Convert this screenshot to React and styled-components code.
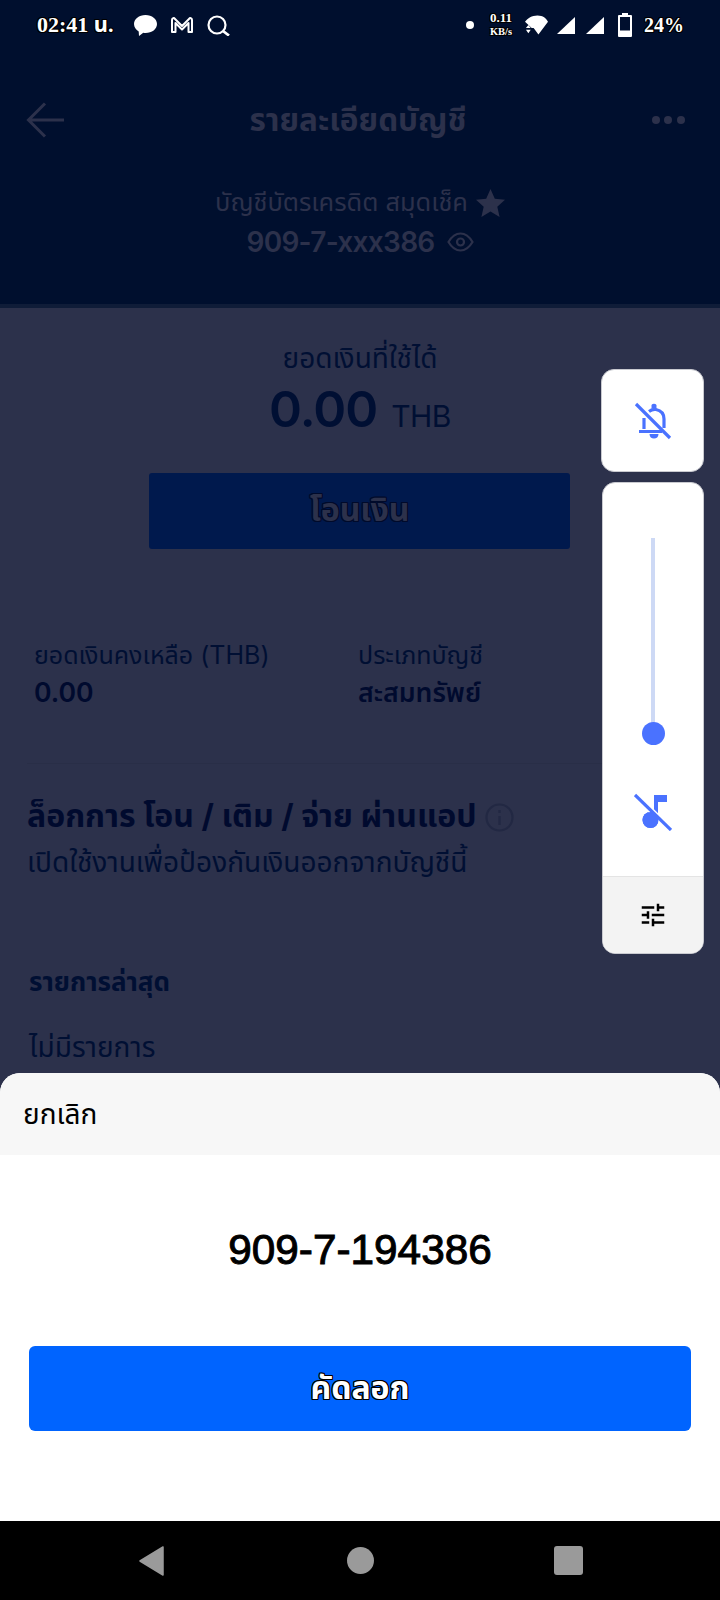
import React from "react";
import styled, { createGlobalStyle } from "styled-components";

const Global = createGlobalStyle`
    html, body {
        margin: 0;
        padding: 0;
        background: #2c314b;
    }
    * {
        box-sizing: border-box;
    }
`

const FONT = `Inter, "Noto Sans Thai", "Noto Sans", "DejaVu Sans", sans-serif`
const OUTLINE = `-1px 0 0 #000, 1px 0 0 #000, 0 -1px 0 #000, 0 1px 0 #000, -1px -1px 0 #000, 1px 1px 0 #000, -1px 1px 0 #000, 1px -1px 0 #000`
const OUTLINE_DIM = `-1px 0 0 #000a2a, 1px 0 0 #000a2a, 0 -1px 0 #000a2a, 0 1px 0 #000a2a, -1px -1px 0 #000a2a, 1px 1px 0 #000a2a, -1px 1px 0 #000a2a, 1px -1px 0 #000a2a`

const Page = styled.div`
    position: relative;
    display: flex;
    flex-direction: column;
    width: 720px;
    height: 1600px;
    overflow: hidden;
    background: #2c314b;
    font-family: ${FONT};
`

const Header = styled.header`
    flex: none;
    height: 308px;
    background: #000f2e;
    border-bottom: 4px solid #0f1c38;
`

const StatusBar = styled.div`
    display: flex;
    align-items: center;
    height: 50px;
    padding: 0 36px 0 37px;
    color: #fff;
`

const StatusText = styled.span`
    font-family: "Liberation Serif", "Noto Sans Thai", serif;
    font-weight: 700;
    font-size: ${(p) => p.size}px;
    letter-spacing: ${(p) => p.spacing || 0}px;
    margin-left: ${(p) => p.left || 0}px;
    white-space: nowrap;
    text-shadow: ${OUTLINE};
`

const StatusGroup = styled.div`
    display: flex;
    align-items: center;
    gap: ${(p) => p.gap}px;
    margin-left: ${(p) => p.left || 0}px;
`

const Speed = styled.div`
    display: flex;
    flex-direction: column;
    align-items: center;
    width: 24px;
    margin-left: 15px;
    font-family: "Liberation Serif", serif;
    font-weight: 700;
    line-height: 14px;
    text-shadow: ${OUTLINE};
`

const SpeedValue = styled.span`
    font-size: 13px;
`

const SpeedUnit = styled.span`
    font-size: 10.5px;
`

const Spacer = styled.div`
    flex: 1;
`

const TitleRow = styled.div`
    display: flex;
    align-items: center;
    justify-content: space-between;
    height: 44px;
    margin-top: 48px;
    padding: 0 35px 0 26px;
`

const Title = styled.h1`
    margin: 0;
    font-size: 31.5px;
    line-height: 44px;
    font-weight: 700;
    color: #2c314b;
`

const Dots = styled.div`
    display: flex;
    gap: 4.5px;
`

const Dot = styled.span`
    width: 8px;
    height: 8px;
    border-radius: 50%;
    background: #2c314b;
`

const AccountType = styled.div`
    display: flex;
    align-items: center;
    justify-content: center;
    gap: 8px;
    height: 40px;
    margin-top: 41px;
    font-size: 25.4px;
    color: #2c314b;
`

const AccountNo = styled.div`
    display: flex;
    align-items: center;
    justify-content: center;
    gap: 12px;
    height: 38px;
    font-size: 28px;
    letter-spacing: -0.7px;
    font-weight: 600;
    color: #2c314b;
`

const Body = styled.main`
    flex: 1;
    padding-top: 30px;
    color: #000a2e;
`

const Center = styled.div`
    height: ${(p) => p.h}px;
    line-height: ${(p) => p.h}px;
    text-align: center;
    font-size: 28px;
    color: #000f33;
`

const Amount = styled.b`
    font-size: 50px;
    letter-spacing: -1px;
    font-weight: 600;
`

const Currency = styled.span`
    margin-left: 14px;
    font-size: 30px;
    letter-spacing: -0.5px;
`

const TransferButton = styled.div`
    display: flex;
    align-items: center;
    justify-content: center;
    width: 421px;
    height: 76px;
    margin: 33px 0 0 149px;
    border-radius: 3px;
    background: #00194d;
    font-size: 32px;
    font-weight: 700;
    color: #2c314b;
    text-shadow: ${OUTLINE_DIM};
`

const InfoGrid = styled.div`
    display: grid;
    grid-template-columns: 324px 1fr;
    margin-top: 88px;
    padding-left: 34px;
`

const InfoLabel = styled.div`
    height: 36px;
    line-height: 36px;
    font-size: 25px;
    color: #000f33;
`

const InfoValue = styled.div`
    height: 38px;
    line-height: 38px;
    font-size: 26.6px;
    font-weight: 600;
    color: #000a2e;
`

const Divider = styled.div`
    height: 1px;
    margin: 52px 27px 0;
    background: #292e47;
`

const LockTitle = styled.div`
    display: flex;
    align-items: center;
    gap: 8px;
    height: 40px;
    margin: 33px 0 0 27px;
    font-size: 32px;
    font-weight: 700;
`

const Line = styled.div`
    height: 40px;
    line-height: 40px;
    margin: ${(p) => p.top}px 0 0 ${(p) => p.left || 29}px;
    font-size: ${(p) => p.size || 28}px;
    font-weight: ${(p) => (p.bold ? 700 : 400)};
    color: #000f33;
`

const Sheet = styled.section`
    flex: none;
    height: 448px;
    overflow: hidden;
    border-radius: 20px 20px 0 0;
    background: #fff;
`

const SheetHead = styled.div`
    height: 82px;
    line-height: 82px;
    padding-left: 23px;
    background: #f7f7f7;
    font-size: 28px;
    color: #000;
`

const AccountFull = styled.div`
    height: 60px;
    margin-top: 65px;
    line-height: 60px;
    text-align: center;
    font-family: "Liberation Sans", sans-serif;
    font-size: 42.3px;
    -webkit-text-stroke: 1px #000;
    color: #000;
`

const CopyButton = styled.div`
    display: flex;
    align-items: center;
    justify-content: center;
    height: 85px;
    margin: 66px 29px 0;
    border-radius: 6px;
    background: #0064ff;
    font-size: 32px;
    font-weight: 700;
    color: #fff;
    text-shadow: ${OUTLINE};
`

const NavBar = styled.nav`
    flex: none;
    display: flex;
    align-items: center;
    height: 79px;
    padding-left: 139px;
    background: #000;
`

const NavHome = styled.span`
    width: 27px;
    height: 27px;
    margin-left: 183px;
    border-radius: 50%;
    background: #9a9a9a;
`

const NavSquare = styled.span`
    width: 29px;
    height: 29px;
    margin-left: 180px;
    border-radius: 3px;
    background: #9a9a9a;
`

const VolumeDock = styled.aside`
    position: absolute;
    top: 369px;
    left: 601px;
    display: flex;
    flex-direction: column;
    align-items: flex-end;
    gap: 10px;
    width: 103px;
`

const Card = styled.div`
    width: ${(p) => p.w}px;
    overflow: hidden;
    border-radius: 13px;
    border: 1px solid #c9cad0;
    background: #fff;
`

const BellCell = styled.div`
    display: flex;
    align-items: center;
    justify-content: center;
    height: 101px;
`

const SliderCell = styled.div`
    display: flex;
    flex-direction: column;
    align-items: center;
    height: 393px;
    padding-top: 55px;
`

const Track = styled.div`
    position: relative;
    width: 4px;
    height: 195px;
    background: #cdd9f5;
`

const Thumb = styled.span`
    position: absolute;
    left: -9.5px;
    bottom: -11.5px;
    width: 23px;
    height: 23px;
    border-radius: 50%;
    background: #4a72ff;
`

const MusicWrap = styled.div`
    margin-top: 60px;
    height: 38px;
`

const TuneCell = styled.div`
    display: flex;
    align-items: center;
    justify-content: center;
    height: 77px;
    border-top: 1px solid #e4e4e4;
    background: #f3f3f3;
`

const Svg = styled.svg`
    display: block;
    flex: none;
    margin-left: ${(p) => p.$left || 0}px;
`

const ICON_DIM = "#2c314b"
const BLUE = "#4a72ff"

const App = () => {
    return (
        <Page>
            <Global />
            <Header>
                <StatusBar>
                    <StatusText size={22}>02:41 น.</StatusText>
                    <StatusGroup gap={14} left={20}>
                        <Svg width="23" height="21" viewBox="0 0 23 21">
                            <path fill="#fff" d="M11.500 0C18 0 23 4 23 9s-5 9-11.500 9c-.8 0-1.500 0-2.200-.2L5 21l-.3-4.600C2 14.800 0 12 0 9 0 4 5 0 11.500 0z" />
                        </Svg>
                        <Svg width="22" height="16" viewBox="0 0 22 16">
                            <path fill="none" stroke="#fff" strokeWidth="2" strokeLinejoin="round" d="M1 15V3c0-2 2-2.500 3-1l7 7 7-7c1-1.500 3-1 3 1v12h-3.500V6L11 12.500 4.500 6v9z" />
                        </Svg>
                        <Svg width="24" height="21" viewBox="0 0 24 21">
                            <circle cx="10" cy="10" r="8.500" fill="none" stroke="#fff" strokeWidth="2.200" />
                            <path stroke="#fff" strokeWidth="2.800" d="M16 16l6 4.500" />
                        </Svg>
                    </StatusGroup>
                    <Spacer />
                    <StatusGroup gap={0}>
                        <Svg width="8" height="8" viewBox="0 0 8 8"><circle cx="4" cy="4" r="4" fill="#fff" /></Svg>
                        <Speed>
                            <SpeedValue>0.11</SpeedValue>
                            <SpeedUnit>KB/s</SpeedUnit>
                        </Speed>
                        <Svg $left={12} width="23" height="20" viewBox="0 0 24 20">
                            <path fill="#fff" d="M0 6.500C3 3 7 0 13 0s9 3 11 6.500L14 20 9 13H7z" />
                            <path fill="#fff" d="M1 13l2.500-3L6 13zM1 15h5l-2.500 3.500z" />
                        </Svg>
                        <Svg $left={9} width="18" height="17" viewBox="0 0 19 18"><path fill="#fff" d="M19 0v18H0z" /></Svg>
                        <Svg $left={11} width="18" height="17" viewBox="0 0 19 18"><path fill="#fff" d="M19 0v18H0z" /></Svg>
                        <Svg $left={14} width="14" height="24" viewBox="0 0 14 24">
                            <path fill="#fff" d="M4 0h6v2h3a1 1 0 0 1 1 1v20a1 1 0 0 1-1 1H1a1 1 0 0 1-1-1V3a1 1 0 0 1 1-1h3z" />
                            <rect x="2" y="4" width="10" height="13.500" fill="#000f2e" />
                        </Svg>
                        <StatusText size={20} left={12}>24%</StatusText>
                    </StatusGroup>
                </StatusBar>
                <TitleRow>
                    <Svg width="38" height="36" viewBox="0 0 38 36">
                        <path fill="none" stroke={ICON_DIM} strokeWidth="3" d="M38 18H3M19 1.500L2.500 18 19 34.500" />
                    </Svg>
                    <Title>รายละเอียดบัญชี</Title>
                    <Dots>
                        <Dot />
                        <Dot />
                        <Dot />
                    </Dots>
                </TitleRow>
                <AccountType>
                    <span>บัญชีบัตรเครดิต สมุดเช็ค</span>
                    <Svg width="29" height="28" viewBox="0 0 29 28">
                        <path fill={ICON_DIM} d="M14.500 0l4.300 9.800 10.200 1-7.700 7 2.300 10.200-9.100-5.400L5.400 28l2.300-10.200L0 10.800l10.200-1z" />
                    </Svg>
                </AccountType>
                <AccountNo>
                    <span>909-7-xxx386</span>
                    <Svg width="27" height="20" viewBox="0 0 27 20">
                        <path fill="none" stroke={ICON_DIM} strokeWidth="2.200" d="M1.500 10C5 4 9 1.500 13.500 1.500S22 4 25.500 10C22 16 18 18.500 13.500 18.500S5 16 1.500 10z" />
                        <circle cx="13.500" cy="10" r="3.500" fill="none" stroke={ICON_DIM} strokeWidth="2.200" />
                    </Svg>
                </AccountNo>
            </Header>

            <Body>
                <Center h={40}>ยอดเงินที่ใช้ได้</Center>
                <Center h={62}>
                    <Amount>0.00</Amount>
                    <Currency>THB</Currency>
                </Center>
                <TransferButton>โอนเงิน</TransferButton>
                <InfoGrid>
                    <div>
                        <InfoLabel>ยอดเงินคงเหลือ (THB)</InfoLabel>
                        <InfoValue>0.00</InfoValue>
                    </div>
                    <div>
                        <InfoLabel>ประเภทบัญชี</InfoLabel>
                        <InfoValue>สะสมทรัพย์</InfoValue>
                    </div>
                </InfoGrid>
                <Divider />
                <LockTitle>
                    <span>ล็อกการ โอน / เติม / จ่าย ผ่านแอป</span>
                    <Svg width="29" height="29" viewBox="0 0 29 29">
                        <circle cx="14.500" cy="14.500" r="13" fill="none" stroke="#222843" strokeWidth="2.200" />
                        <path stroke="#222843" strokeWidth="2.400" d="M14.500 13v9M14.500 7v3" />
                    </Svg>
                </LockTitle>
                <Line top={5} left={27}>เปิดใช้งานเพื่อป้องกันเงินออกจากบัญชีนี้</Line>
                <Line top={80} size={26} bold>รายการล่าสุด</Line>
                <Line top={25}>ไม่มีรายการ</Line>
            </Body>

            <Sheet>
                <SheetHead>ยกเลิก</SheetHead>
                <AccountFull>909-7-194386</AccountFull>
                <CopyButton>คัดลอก</CopyButton>
            </Sheet>

            <NavBar>
                <Svg width="25" height="30" viewBox="0 0 25 30">
                    <path fill="#9a9a9a" stroke="#9a9a9a" strokeWidth="1.500" strokeLinejoin="round" d="M24 1v28L1 15z" />
                </Svg>
                <NavHome />
                <NavSquare />
            </NavBar>

            <VolumeDock>
                <Card w={103}>
                    <BellCell>
                        <Svg width="38" height="38" viewBox="0 0 38 38">
                            <path fill="none" stroke={BLUE} strokeWidth="3.200" d="M10 16v11M30 26v-9c0-5-3-8.500-8-9.500-3-.5-5 .5-7 2M5 29.500h23" />
                            <path fill={BLUE} d="M17.500 3a3 3 0 0 1 5 0v3h-5zM15.500 32h9c0 3-2 4.500-4.500 4.500S15.500 35 15.500 32z" />
                            <path stroke={BLUE} strokeWidth="3.200" d="M2 2l34 34" />
                        </Svg>
                    </BellCell>
                </Card>
                <Card w={102}>
                    <SliderCell>
                        <Track>
                            <Thumb />
                        </Track>
                        <MusicWrap>
                            <Svg width="38" height="38" viewBox="0 0 38 38">
                                <circle cx="16.500" cy="27" r="8" fill={BLUE} />
                                <path fill={BLUE} d="M20 2h13v7h-9v11h-4z" />
                                <path stroke="#fff" strokeWidth="6" d="M1 2l36 35" />
                                <circle cx="16.500" cy="27" r="8" fill={BLUE} />
                                <path stroke={BLUE} strokeWidth="3.200" d="M1 2l36 35" />
                            </Svg>
                        </MusicWrap>
                    </SliderCell>
                    <TuneCell>
                        <Svg width="30" height="30" viewBox="0 0 24 24">
                            <path fill="#000" d="M3 17v2h6v-2H3zM3 5v2h10V5H3zm10 16v-2h8v-2h-8v-2h-2v6h2zM7 9v2H3v2h4v2h2V9H7zm14 4v-2H11v2h10zm-6-4h2V7h4V5h-4V3h-2v6z" />
                        </Svg>
                    </TuneCell>
                </Card>
            </VolumeDock>
        </Page>
    )
}

export default App;
